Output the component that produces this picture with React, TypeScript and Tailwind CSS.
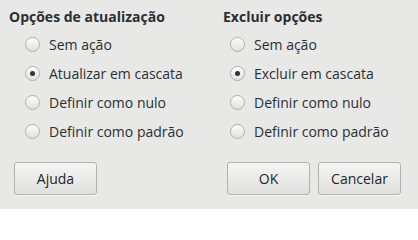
function Radio({ checked }: { checked?: boolean }) {
  return (
    <span className="w-[15px] h-[15px] rounded-full border border-[#aeaeab] bg-gradient-to-b from-[#fdfdfc] to-[#e0e0de] shadow-[inset_0_1px_0_rgba(255,255,255,0.8)] flex items-center justify-center shrink-0">
      {checked && <span className="w-[5px] h-[5px] rounded-full bg-[#2e3436]" />}
    </span>
  );
}

function Group({
  title,
  options,
  selected,
  indent,
  width,
}: {
  title: string;
  options: string[];
  selected: number;
  indent: string;
  width: string;
}) {
  return (
    <div className={width}>
      <div className="h-[20px] leading-[20px] font-bold">{title}</div>
      <div className={`mt-[3px] flex flex-col ${indent}`}>
        {options.map((o, i) => (
          <div key={o} className="h-[29px] flex items-center gap-[9px]">
            <Radio checked={i === selected} />
            <span>{o}</span>
          </div>
        ))}
      </div>
    </div>
  );
}

function Button({ label }: { label: string }) {
  return (
    <button className="w-[83px] h-[33px] rounded-[3px] border border-[#b1b1ae] bg-gradient-to-b from-[#f5f5f4] to-[#e0e0de] text-[#222729] shadow-[0_1px_0_rgba(255,255,255,0.6)]">
      {label}
    </button>
  );
}

const updateOptions = [
  "Sem ação",
  "Atualizar em cascata",
  "Definir como nulo",
  "Definir como padrão",
];

const deleteOptions = [
  "Sem ação",
  "Excluir em cascata",
  "Definir como nulo",
  "Definir como padrão",
];

export default function App() {
  return (
    <div className="w-[418px] h-[209px] bg-[#e8e8e7] font-['Open_Sans',sans-serif] text-[14px] text-[#2a2f31] flex flex-col">
      <div className="flex pt-[7px] pl-[9px]">
        <Group
          title="Opções de atualização"
          options={updateOptions}
          selected={1}
          indent="pl-[16px]"
          width="w-[214px]"
        />
        <Group
          title="Excluir opções"
          options={deleteOptions}
          selected={1}
          indent="pl-[7px]"
          width="w-[180px]"
        />
      </div>
      <div className="flex mt-[16px] pl-[14px] pr-[17px]">
        <Button label="Ajuda" />
        <div className="flex-1" />
        <div className="flex gap-[8px]">
          <Button label="OK" />
          <Button label="Cancelar" />
        </div>
      </div>
    </div>
  );
}
